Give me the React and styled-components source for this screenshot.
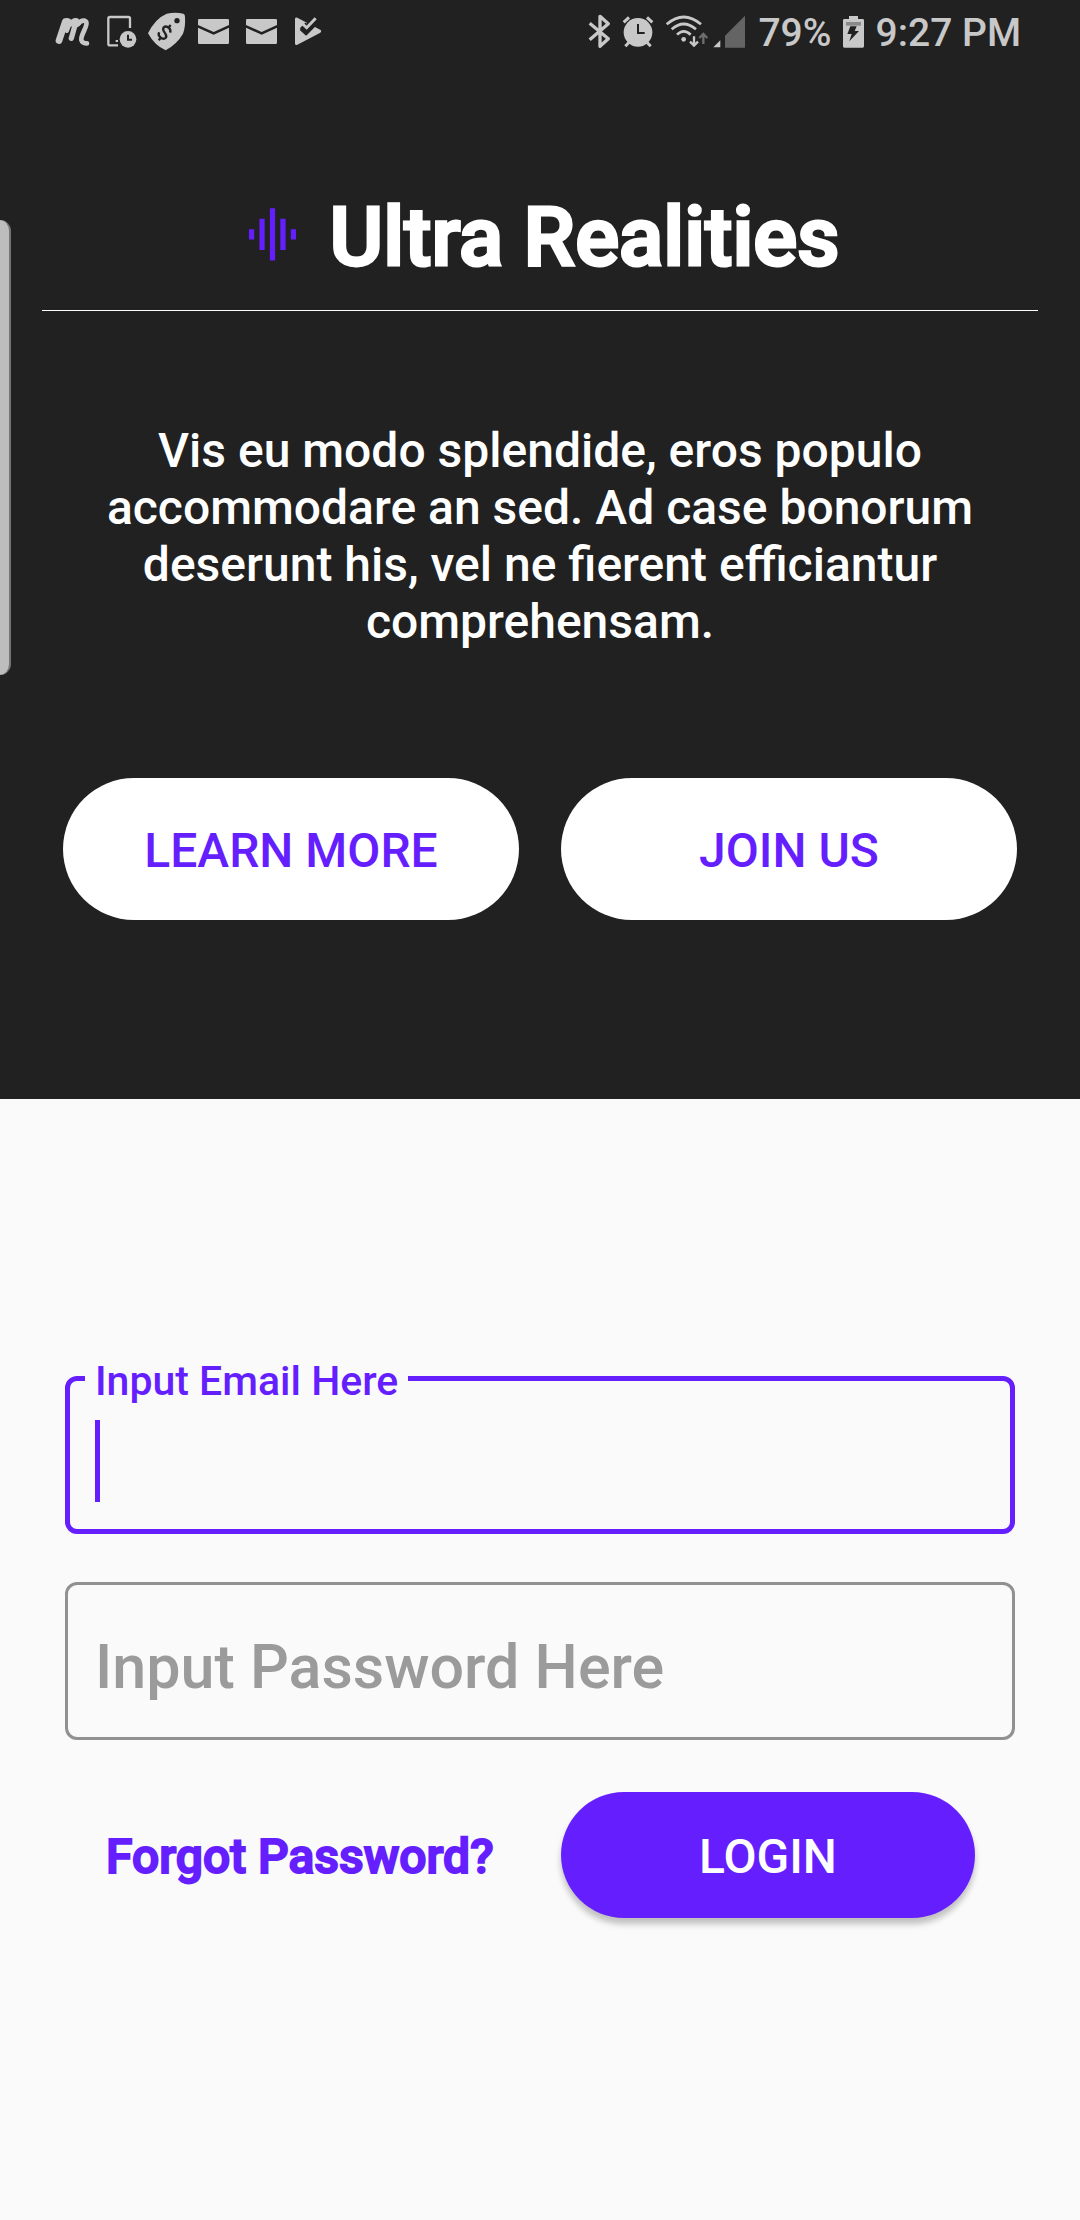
import React, { useState } from "react";
import styled, { createGlobalStyle } from "styled-components";

const purple = "#651fff";
const dark = "#212121";
const paper = "#fafafa";
const statusGrey = "#c8c8c8";

const GlobalStyle = createGlobalStyle`
  * { box-sizing: border-box; }
  body {
    margin: 0;
    background: ${paper};
    font-family: Roboto, "Liberation Sans", sans-serif;
    font-weight: 500;
  }
`;

const Page = styled.div`
  position: relative;
  min-height: 100vh;
`;

const StatusBar = styled.div`
  display: flex;
  justify-content: space-between;
  height: 64px;
  padding: 0 51px 0 48px;
  color: ${statusGrey};
`;

const StatusGroup = styled.div`
  display: flex;
  align-items: center;
`;

const StatusText = styled.span`
  padding: 2px 8px 0;
  font-size: 39px;
  line-height: 64px;
  white-space: nowrap;
`;

const Glyph = styled.svg`
  display: block;
  flex: none;
  height: 64px;
`;

const EdgeHandle = styled.div`
  position: absolute;
  top: 220px;
  left: 0;
  width: 11px;
  height: 455px;
  background: #bdbdbd;
  border-right: 2px solid #757575;
  border-radius: 0 12px 12px 0;
`;

const Hero = styled.header`
  background: ${dark};
  color: #fff;
  padding-bottom: 179px;
`;

const Brand = styled.div`
  display: flex;
  align-items: center;
  justify-content: center;
  gap: 26px;
  margin: 124px 42px 0;
  padding-bottom: 24px;
  border-bottom: 1px solid #fff;
`;

const Logo = styled.svg`
  width: 63px;
  height: 68px;
  fill: ${purple};
`;

const Title = styled.h1`
  margin: 0;
  font-size: 82px;
  font-weight: 500;
  line-height: 98px;
  -webkit-text-stroke: 3px currentColor;
`;

const Intro = styled.p`
  margin: 111px 84px 128px;
  font-size: 48px;
  line-height: 57px;
  text-align: center;
`;

const Actions = styled.div`
  display: grid;
  grid-template-columns: 1fr 1fr;
  gap: 42px;
  padding: 0 63px;
`;

const Button = styled.button`
  height: ${(p) => (p.$primary ? "126px" : "142px")};
  padding: 3px 0 0;
  border: 0;
  border-radius: 71px;
  background: ${(p) => (p.$primary ? purple : "#fff")};
  color: ${(p) => (p.$primary ? "#fff" : purple)};
  box-shadow: ${(p) => (p.$primary ? "0 6px 6px rgba(0, 0, 0, 0.24)" : "none")};
  font: inherit;
  font-size: 48px;
  line-height: 56px;
`;

const Form = styled.form`
  display: grid;
  gap: 48px;
  padding: 277px 65px 0;
`;

const FieldBox = styled.div`
  position: relative;
`;

const Input = styled.input`
  display: block;
  width: 100%;
  height: 158px;
  padding: 0 30px;
  border: ${(p) => (p.$active ? `5px solid ${purple}` : "3px solid #919191")};
  border-radius: 12px;
  outline: none;
  background: transparent;
  caret-color: transparent;
  color: ${dark};
  font: inherit;
  font-size: 61px;
`;

const Label = styled.label`
  position: absolute;
  left: 20px;
  top: ${(p) => (p.$raised ? "-20px" : "48px")};
  padding: 0 10px;
  background: ${paper};
  color: ${(p) => (p.$active ? purple : "#9b9b9b")};
  font-size: ${(p) => (p.$raised ? "41px" : "61px")};
  line-height: ${(p) => (p.$raised ? "50px" : "74px")};
  pointer-events: none;
`;

const Caret = styled.span`
  position: absolute;
  left: 30px;
  top: 44px;
  width: 5px;
  height: 82px;
  background: ${purple};
`;

const FormFooter = styled.div`
  display: grid;
  grid-template-columns: 1fr 1fr;
  align-items: center;
  gap: 42px;
  margin-top: 4px;
  padding: 0 40px;
`;

const ForgotLink = styled.a`
  padding: 3px 0 0 1px;
  color: ${purple};
  font-size: 48px;
  line-height: 56px;
  text-decoration: none;
  white-space: nowrap;
  -webkit-text-stroke: 2px currentColor;
`;

function Notifications() {
  return (
    <StatusGroup>
      <Glyph width="48" viewBox="24 0 144 192" fill="none" stroke={statusGrey} strokeLinecap="round" strokeLinejoin="round">
        <path strokeWidth="20" d="M76 65 L57 122" />
        <path strokeWidth="14" d="M76 63 Q86 58 90 66 L80 92" />
        <path strokeWidth="16" d="M108 63 Q103 84 94 115" />
        <path strokeWidth="15" d="M92 72 Q100 60 110 62 L116 70" />
        <path strokeWidth="14" d="M112 74 Q122 60 134 62 Q141 64 139 74 C136 90 122 106 124 120 Q127 131 141 130" />
      </Glyph>
      <Glyph width="48" viewBox="168 0 144 192" fill="none" stroke={statusGrey}>
        <path strokeWidth="7" d="M270 84 V56 Q270 51 265 51 H210 Q205 51 205 56 V131 Q205 136 210 136 H234" />
        <rect x="227" y="120" width="7" height="6" fill={statusGrey} stroke="none" />
        <circle cx="264" cy="118" r="25" fill={statusGrey} stroke="none" />
        <path stroke={dark} strokeWidth="6" d="M264 104 V119 H276" />
      </Glyph>
      <Glyph width="48" viewBox="312 0 144 192" fill="none">
        <path fill={statusGrey} d="M324 100 Q345 56 380 41 Q406 36 430 41 Q435 43 435 50 Q437 80 429 101 Q412 131 377 151 Q344 137 324 100 Z" />
        <circle cx="411" cy="62" r="8" fill={dark} />
        <path
          stroke={dark}
          strokeWidth="7"
          transform="rotate(38 374 98)"
          d="M387 88 Q384 79 374 79 Q362 80 362 88 Q363 95 374 98 Q386 101 386 108 Q385 117 374 117 Q362 117 360 107 M374 69 V80 M374 116 V127"
        />
      </Glyph>
      {[474, 615].map((x) => (
        <Glyph key={x} width="48" viewBox={`${x - 18} 0 144 192`} fill={statusGrey}>
          <path d={`M${x + 4} 57 h85 q4 0 4 4 v14 l-46 21 l-47 -21 v-14 q0 -4 4 -4 Z`} />
          <path d={`M${x} 83 l47 21 l46 -21 v45 q0 4 -4 4 h-85 q-4 0 -4 -4 Z`} />
        </Glyph>
      ))}
      <Glyph width="48" viewBox="744 0 144 192" fill="none">
        <path fill={statusGrey} d="M765 56 Q766 51 772 53 L842 90 Q846 94 841 98 L772 134 Q766 137 765 131 Z" />
        <path stroke={dark} strokeWidth="24" d="M788 76 L800 88 L832 54" />
        <path stroke={statusGrey} strokeWidth="9" d="M788 72 L800 83 L827 55" />
        <path stroke={dark} strokeWidth="8" d="M782 87 L798 102 L821 79" />
      </Glyph>
    </StatusGroup>
  );
}

function SystemStatus() {
  return (
    <StatusGroup>
      <Glyph width="40" viewBox="0 0 120 192" fill="none" stroke={statusGrey} strokeWidth="10" strokeLinejoin="round">
        <path d="M35 70 L91 116 L66 139 V49 L91 71 L35 119" />
      </Glyph>
      <Glyph width="42" viewBox="120 0 126 192" fill="none" stroke={statusGrey}>
        <circle cx="180" cy="97" r="43" fill={statusGrey} stroke="none" />
        <path strokeWidth="9" d="M137 67 L153 52 M207 52 L223 67 M142 139 L154 126 M218 139 L206 126" />
        <path stroke={dark} strokeWidth="6" d="M180 72 V99 H200" />
      </Glyph>
      <Glyph width="50" viewBox="246 0 150 192" fill="none" stroke={statusGrey} strokeWidth="8">
        <path d="M266 73 Q317 29 369 73 M281 88 Q317 56 354 88 M297 104 Q317 84 338 104" />
        <circle cx="317" cy="118" r="7" fill={statusGrey} stroke="none" />
        <path strokeWidth="7" d="M348 109 V136 M336 125 L348 137 L360 125" />
        <path stroke="#6e6e6e" strokeWidth="7" d="M376 132 V103 M364 114 L376 102 L388 114" />
      </Glyph>
      <Glyph width="40" viewBox="396 0 120 192">
        <path fill={statusGrey} d="M427 121 V142 H406 Z" />
        <path fill="#646464" d="M501 47 V143 H441 V107 Z" />
      </Glyph>
      <StatusText>79%</StatusText>
      <Glyph width="28" viewBox="300 0 84 192">
        <path fill={statusGrey} d="M327 48 h27 v9 h14 q4 0 4 4 v78 q0 4 -4 4 h-55 q-4 0 -4 -4 v-78 q0 -4 4 -4 h14 Z" />
        <path fill="#8a8a8a" d="M318 66 h45 v11 h-45 Z" />
        <path fill={dark} d="M331 79 H350 L344 93 H357 L328 124 L335 102 H322 Z" />
      </Glyph>
      <StatusText>9:27 PM</StatusText>
    </StatusGroup>
  );
}

function Field({ id, type, label, value, focused, onFocus, onChange }) {
  const raised = focused || value !== "";
  return (
    <FieldBox>
      <Input
        id={id}
        type={type}
        value={value}
        $active={focused}
        onFocus={onFocus}
        onChange={(e) => onChange(e.target.value)}
      />
      <Label htmlFor={id} $raised={raised} $active={focused}>
        {label}
      </Label>
      {focused && value === "" && <Caret />}
    </FieldBox>
  );
}

export default function App() {
  const [focused, setFocused] = useState("email");
  const [email, setEmail] = useState("");
  const [password, setPassword] = useState("");

  return (
    <Page>
      <GlobalStyle />
      <Hero>
        <StatusBar>
          <Notifications />
          <SystemStatus />
        </StatusBar>
        <Brand>
          <Logo viewBox="0 0 24 26" aria-hidden="true">
            <path d="M3 10h2v4H3zM7 6h2v12H7zM11 2h2v20h-2zM15 6h2v12h-2zM19 10h2v4h-2z" />
          </Logo>
          <Title>Ultra Realities</Title>
        </Brand>
        <Intro>
          Vis eu modo splendide, eros populo accommodare an sed. Ad case bonorum
          deserunt his, vel ne fierent efficiantur comprehensam.
        </Intro>
        <Actions>
          <Button type="button">LEARN MORE</Button>
          <Button type="button">JOIN US</Button>
        </Actions>
      </Hero>
      <Form onSubmit={(e) => e.preventDefault()}>
        <Field
          id="email"
          type="email"
          label="Input Email Here"
          value={email}
          focused={focused === "email"}
          onFocus={() => setFocused("email")}
          onChange={setEmail}
        />
        <Field
          id="password"
          type="password"
          label="Input Password Here"
          value={password}
          focused={focused === "password"}
          onFocus={() => setFocused("password")}
          onChange={setPassword}
        />
        <FormFooter>
          <ForgotLink href="#forgot">Forgot Password?</ForgotLink>
          <Button type="submit" $primary>
            LOGIN
          </Button>
        </FormFooter>
      </Form>
      <EdgeHandle />
    </Page>
  );
}
